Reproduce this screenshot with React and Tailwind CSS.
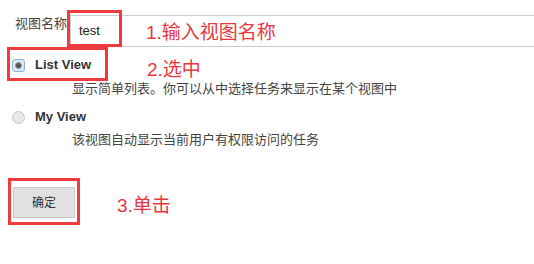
import React from "react";

const font = { fontFamily: '"Liberation Sans", "Noto Sans CJK SC", sans-serif' };

const Radio = ({ checked }) =>
    checked ? (
        <span className="w-[13px] h-[13px] rounded-[3px] border border-[#8fb3cf] bg-[#dce9f3] flex items-center justify-center shrink-0">
            <span className="w-[7px] h-[7px] rounded-full border border-[#999] bg-[#555]" />
        </span>
    ) : (
        <span className="w-[13px] h-[13px] rounded-full border border-[#c8c8c8] bg-[#e8e8e8] shrink-0" />
    );

const App = () => {
    return (
        <div className="relative w-[534px] h-[264px] bg-white text-[#333] overflow-hidden" style={font}>
            <div className="flex items-start pl-[15px] pt-[15px]">
                <label className="w-[55px] text-[13px] leading-[16px] mt-[1px] text-[#444]">视图名称</label>
                <div className="flex-1 h-[32px] border border-r-0 border-[#cccccc] flex items-center px-[8px] text-[13px] text-[#222]">
                    test
                </div>
            </div>

            <div className="pl-[12px] pt-[11px]">
                <div className="flex items-center gap-[10px] h-[14px]">
                    <Radio checked />
                    <span className="text-[13px] font-bold text-[#333]">List View</span>
                </div>
                <p className="pl-[60px] mt-[9px] text-[13px] leading-[16px] text-[#444]">
                    显示简单列表。你可以从中选择任务来显示在某个视图中
                </p>

                <div className="flex items-center gap-[10px] h-[14px] mt-[13px]">
                    <Radio />
                    <span className="text-[13px] font-bold text-[#333]">My View</span>
                </div>
                <p className="pl-[60px] mt-[8px] text-[13px] leading-[16px] text-[#444]">
                    该视图自动显示当前用户有权限访问的任务
                </p>
            </div>

            <div className="pl-[13px] pt-[39px]">
                <button className="w-[62px] h-[31px] bg-[#e1e1e1] border border-[#cccccc] text-[12px] text-[#333]">
                    确定
                </button>
            </div>

            <div className="absolute left-[67px] top-[10px] w-[55px] h-[37px] border-[3px] border-[#ee3b3f]" />
            <div className="absolute left-[7px] top-[47px] w-[101px] h-[34px] border-[3px] border-[#ee3b3f]" />
            <div className="absolute left-[8px] top-[178px] w-[72px] h-[47px] border-[3px] border-[#ee3b3f]" />

            <span className="absolute left-[146px] top-[21px] text-[19px] leading-[24px] text-[#e8363f]">1.输入视图名称</span>
            <span className="absolute left-[147px] top-[58px] text-[19px] leading-[24px] text-[#e8363f]">2.选中</span>
            <span className="absolute left-[117px] top-[194px] text-[19px] leading-[24px] text-[#e8363f]">3.单击</span>
        </div>
    );
};

export default App;
